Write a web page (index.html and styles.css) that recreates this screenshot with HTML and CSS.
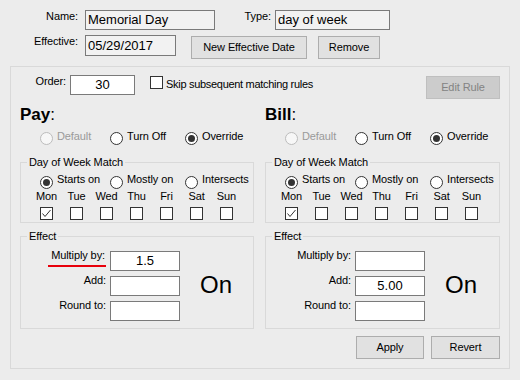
FILE: index.html
```html
<html>
<head>
<link rel="stylesheet" href="styles.css">
<title>Holiday Rule</title>
</head>
<body>
<div class="header">
  <div class="header-row">
    <span class="main-label">Name:</span>
    <span class="textbox readonly name-box">Memorial Day</span>
    <span class="type-label">Type:</span>
    <span class="textbox readonly type-box">day of week</span>
  </div>
  <div class="header-row">
    <span class="main-label">Effective:</span>
    <span class="textbox readonly date-box">05/29/2017</span>
    <button class="btn new-date">New Effective Date</button>
    <button class="btn remove">Remove</button>
  </div>
</div>

<div class="rule">
  <div class="order-row">
    <span class="order-label">Order:</span>
    <span class="textbox order-box">30</span>
    <span class="check skip-check"></span>
    <span class="skip-label">Skip subsequent matching rules</span>
    <button class="btn edit-btn">Edit Rule</button>
  </div>

  <div class="columns">
    <!-- Pay side -->
    <div class="col">
      <div class="heading">Pay<span class="colon">:</span></div>
      <div class="choice-row top-choices">
        <span class="choice disabled"><span class="radio"></span>Default</span>
        <span class="choice"><span class="radio"></span>Turn Off</span>
        <span class="choice"><span class="radio checked"></span>Override</span>
      </div>
      <fieldset class="group dow">
        <legend>Day of Week Match</legend>
        <div class="dow-body">
          <div class="choice-row">
            <span class="choice"><span class="radio checked"></span>Starts on</span>
            <span class="choice"><span class="radio"></span>Mostly on</span>
            <span class="choice"><span class="radio"></span>Intersects</span>
          </div>
          <div class="days">
            <div class="day">Mon<span class="check"><svg width="11" height="11" viewBox="0 0 11 11"><polyline points="1.5,5.5 4,8.5 9.5,2" fill="none" stroke="#333" stroke-width="1"/></svg></span></div>
            <div class="day">Tue<span class="check"></span></div>
            <div class="day">Wed<span class="check"></span></div>
            <div class="day">Thu<span class="check"></span></div>
            <div class="day">Fri<span class="check"></span></div>
            <div class="day">Sat<span class="check"></span></div>
            <div class="day">Sun<span class="check"></span></div>
          </div>
        </div>
      </fieldset>
      <fieldset class="group effect">
        <legend>Effect</legend>
        <div class="effect-body">
          <div class="fields">
            <div class="field"><span class="field-label"><span class="flag">Multiply by:</span></span><span class="textbox value">1.5</span></div>
            <div class="field"><span class="field-label">Add:</span><span class="textbox value"></span></div>
            <div class="field"><span class="field-label">Round to:</span><span class="textbox value"></span></div>
          </div>
          <div class="on">On</div>
        </div>
      </fieldset>
    </div>

    <!-- Bill side -->
    <div class="col bill">
      <div class="heading">Bill<span class="colon">:</span></div>
      <div class="choice-row top-choices">
        <span class="choice disabled"><span class="radio"></span>Default</span>
        <span class="choice"><span class="radio"></span>Turn Off</span>
        <span class="choice"><span class="radio checked"></span>Override</span>
      </div>
      <fieldset class="group dow">
        <legend>Day of Week Match</legend>
        <div class="dow-body">
          <div class="choice-row">
            <span class="choice"><span class="radio checked"></span>Starts on</span>
            <span class="choice"><span class="radio"></span>Mostly on</span>
            <span class="choice"><span class="radio"></span>Intersects</span>
          </div>
          <div class="days">
            <div class="day">Mon<span class="check"><svg width="11" height="11" viewBox="0 0 11 11"><polyline points="1.5,5.5 4,8.5 9.5,2" fill="none" stroke="#333" stroke-width="1"/></svg></span></div>
            <div class="day">Tue<span class="check"></span></div>
            <div class="day">Wed<span class="check"></span></div>
            <div class="day">Thu<span class="check"></span></div>
            <div class="day">Fri<span class="check"></span></div>
            <div class="day">Sat<span class="check"></span></div>
            <div class="day">Sun<span class="check"></span></div>
          </div>
        </div>
      </fieldset>
      <fieldset class="group effect">
        <legend>Effect</legend>
        <div class="effect-body">
          <div class="fields">
            <div class="field"><span class="field-label">Multiply by:</span><span class="textbox value"></span></div>
            <div class="field"><span class="field-label">Add:</span><span class="textbox value">5.00</span></div>
            <div class="field"><span class="field-label">Round to:</span><span class="textbox value"></span></div>
          </div>
          <div class="on">On</div>
        </div>
      </fieldset>
    </div>
  </div>

  <div class="footer">
    <button class="btn apply">Apply</button>
    <button class="btn revert">Revert</button>
  </div>
</div>
</body>
</html>
```

FILE: styles.css
```css
/* page */
* {box-sizing: border-box;}

body {
  margin: 0;
  width: 520px;
  height: 380px;
  overflow: hidden;
  background-color: #ececec;
  color: #000;
  font-family: "Liberation Sans", Arial, sans-serif;
  font-size: 11px;
  line-height: 13px;
  letter-spacing: -0.1px;
}

/* header fields */
.header {
  padding-top: 10px;
}

.header-row {
  display: flex;
  align-items: flex-start;
}

.header-row + .header-row {
  margin-top: 5px;
}

.main-label {
  width: 78px;
  margin-right: 7px;
  text-align: right;
}

.type-label {
  width: 30px;
  margin-left: 26px;
  margin-right: 4px;
  text-align: right;
}

.textbox {
  height: 20px;
  border: 1px solid #7a7a7a;
  background-color: #fff;
  padding: 0 2px;
  font-size: 13px;
  line-height: 18px;
  letter-spacing: 0;
  white-space: nowrap;
  overflow: hidden;
  flex: none;
}

.textbox.readonly {background-color: #f2f2f2;}

.name-box {width: 130px;}
.type-box {width: 115px;}

.date-box {
  width: 91px;
  height: 21px;
  line-height: 19px;
}

/* buttons */
.btn {
  height: 23px;
  padding: 0;
  border: 1px solid #adadad;
  background-color: #e1e1e1;
  color: #000;
  font: inherit;
  letter-spacing: inherit;
  text-align: center;
  flex: none;
}

.new-date {
  width: 116px;
  margin-left: 15px;
  margin-top: 1px;
}

.remove {
  width: 62px;
  margin-left: 11px;
  margin-top: 1px;
}

/* rule box */
.rule {
  width: 500px;
  margin: 7px 0 0 10px;
  border: 1px solid #d9d9d9;
  padding: 8px 9px 9px;
}

.order-row {
  display: flex;
  align-items: flex-start;
}

.order-label {
  width: 46px;
  margin-right: 4px;
  text-align: right;
}

.order-box {
  width: 65px;
  text-align: center;
}

.check {
  width: 13px;
  height: 13px;
  border: 1px solid #333;
  background-color: #fff;
  flex: none;
  display: block;
}

.check svg {display: block;}

.skip-check {
  margin-left: 15px;
  margin-top: 1px;
}

.skip-label {
  margin-left: 3px;
  margin-top: 3px;
  letter-spacing: -0.3px;
}

.edit-btn {
  width: 74px;
  margin-left: auto;
  margin-top: 1px;
  background-color: #cccccc;
  border-color: #bfbfbf;
  color: #838383;
}

/* pay / bill columns */
.columns {
  display: flex;
  gap: 11px;
  margin-top: 6px;
}

.col {width: 234px;}
.col.bill {width: 235px;}

.heading {
  font-size: 17px;
  line-height: 20px;
  font-weight: bold;
  letter-spacing: 0;
}

.heading .colon {font-weight: normal;}

.choice-row {
  display: flex;
  align-items: flex-start;
  height: 16px;
}

.top-choices {
  margin-top: 5px;
  padding-left: 20px;
  height: 15px;
}

.choice {
  display: flex;
  align-items: flex-start;
  white-space: nowrap;
}

.choice:nth-child(1) {width: 70px;}
.choice:nth-child(2) {width: 75px;}

.choice.disabled {color: #9a9a9a;}

.radio {
  position: relative;
  width: 13px;
  height: 13px;
  margin-top: 2px;
  margin-right: 4px;
  border: 1px solid #333;
  border-radius: 50%;
  background-color: #fff;
  flex: none;
}

.dow .radio {margin-top: 3px;}

.choice.disabled .radio {
  border-color: #bcbcbc;
  background-color: #f7f7f7;
}

.radio.checked::after {
  content: "";
  position: absolute;
  left: 2px;
  top: 2px;
  width: 7px;
  height: 7px;
  border-radius: 50%;
  background-color: #333;
}

/* group boxes */
.group {
  margin: 11px 0 0;
  padding: 0;
  min-width: 0;
  border: 1px solid #d9d9d9;
}

.group legend {
  margin-left: 6px;
  padding: 0 2px;
  line-height: 13px;
}

.group.effect {margin-top: 7px;}

.dow-body {
  padding: 4px 0 2px 19px;
}

.days {
  display: flex;
  gap: 17px;
  margin-top: 1px;
}

.day {
  width: 13px;
  display: flex;
  flex-direction: column;
  align-items: center;
  white-space: nowrap;
}

.day .check {margin-top: 4px;}

/* effect */
.effect-body {
  display: flex;
  align-items: center;
  padding: 8px 0 7px;
}

.fields {
  display: flex;
  flex-direction: column;
  gap: 5px;
}

.field {
  display: flex;
  align-items: flex-start;
}

.field-label {
  width: 85px;
  margin-right: 4px;
  margin-top: -2px;
  text-align: right;
  white-space: nowrap;
}

.flag {
  display: inline-block;
  padding: 0 1px 3px 3px;
  border-bottom: 2px solid #e8000b;
}

.value {
  width: 70px;
  text-align: center;
}

.on {
  margin-left: 20px;
  margin-top: -3px;
  font-size: 24px;
  line-height: 28px;
  letter-spacing: 0;
}

/* apply / revert */
.footer {
  display: flex;
  justify-content: flex-end;
  gap: 7px;
  margin-top: 7px;
}

.apply {width: 68px;}
.revert {width: 69px;}
```
